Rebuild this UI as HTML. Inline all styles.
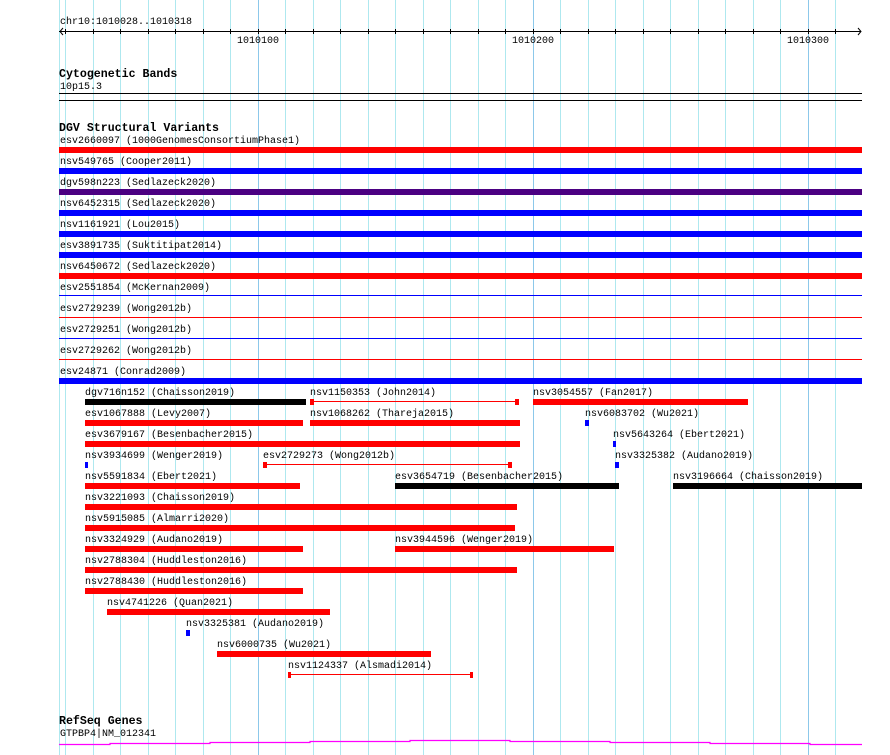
<!DOCTYPE html>
<html><head><meta charset="utf-8"><style>
*{margin:0;padding:0}
body{width:890px;height:755px;background:#fff;position:relative;overflow:hidden;font-family:"Liberation Mono","DejaVu Sans Mono",monospace;font-size:10px;color:#000}
.g{position:absolute;top:0;height:755px;width:1px;background:#aee8ef}
.gd{background:#8cc8ea}
.t{position:absolute;line-height:12px;padding-top:2px;white-space:nowrap;font-size:10px}
.h{position:absolute;font-weight:bold;font-size:11.6px;line-height:13px;padding-top:1px;white-space:nowrap}
.b{position:absolute;height:6px}
.r{background:#f00}.u{background:#00f}.k{background:#000}.p{background:#4b0082}
.l{position:absolute;height:1px}
.tk{position:absolute;top:29px;height:5px;width:1px;background:#000}
</style></head><body>
<div class="g" style="left:59px"></div>
<div class="g" style="left:65px"></div><div class="g" style="left:93px"></div><div class="g" style="left:120px"></div><div class="g" style="left:148px"></div><div class="g" style="left:175px"></div><div class="g" style="left:203px"></div><div class="g" style="left:230px"></div><div class="g gd" style="left:258px"></div><div class="g" style="left:285px"></div><div class="g" style="left:313px"></div><div class="g" style="left:340px"></div><div class="g" style="left:368px"></div><div class="g" style="left:395px"></div><div class="g" style="left:423px"></div><div class="g" style="left:450px"></div><div class="g" style="left:478px"></div><div class="g" style="left:505px"></div><div class="g gd" style="left:533px"></div><div class="g" style="left:560px"></div><div class="g" style="left:588px"></div><div class="g" style="left:615px"></div><div class="g" style="left:643px"></div><div class="g" style="left:670px"></div><div class="g" style="left:698px"></div><div class="g" style="left:725px"></div><div class="g" style="left:753px"></div><div class="g" style="left:780px"></div><div class="g gd" style="left:808px"></div><div class="g" style="left:835px"></div>

<div class="t" style="left:60px;top:15px">chr10:1010028..1010318</div>
<div class="l" style="left:59px;top:31px;width:802px;background:#000"></div>
<svg style="position:absolute;left:0;top:0" width="890" height="40"><path d="M63,28 L60,31.5 L63,35 M858,28 L861,31.5 L858,35" fill="none" stroke="#000" stroke-width="1"/></svg>
<div class="tk" style="left:65px"></div><div class="tk" style="left:93px"></div><div class="tk" style="left:120px"></div><div class="tk" style="left:148px"></div><div class="tk" style="left:175px"></div><div class="tk" style="left:203px"></div><div class="tk" style="left:230px"></div><div class="tk" style="left:258px"></div><div class="tk" style="left:285px"></div><div class="tk" style="left:313px"></div><div class="tk" style="left:340px"></div><div class="tk" style="left:368px"></div><div class="tk" style="left:395px"></div><div class="tk" style="left:423px"></div><div class="tk" style="left:450px"></div><div class="tk" style="left:478px"></div><div class="tk" style="left:505px"></div><div class="tk" style="left:533px"></div><div class="tk" style="left:560px"></div><div class="tk" style="left:588px"></div><div class="tk" style="left:615px"></div><div class="tk" style="left:643px"></div><div class="tk" style="left:670px"></div><div class="tk" style="left:698px"></div><div class="tk" style="left:725px"></div><div class="tk" style="left:753px"></div><div class="tk" style="left:780px"></div><div class="tk" style="left:808px"></div><div class="tk" style="left:835px"></div>
<div class="t" style="left:237px;top:34px">1010100</div>
<div class="t" style="left:512px;top:34px">1010200</div>
<div class="t" style="left:787px;top:34px">1010300</div>

<div class="h" style="left:59px;top:67px">Cytogenetic Bands</div>
<div class="t" style="left:60px;top:80px">10p15.3</div>
<div class="l" style="left:59px;top:93px;width:803px;background:#000"></div>
<div class="l" style="left:59px;top:100px;width:803px;background:#000"></div>

<div class="h" style="left:59px;top:121px">DGV Structural Variants</div>
<div class="t" style="left:60px;top:134px">esv2660097 (1000GenomesConsortiumPhase1)</div><div class="b r" style="left:59px;top:147px;width:803px"></div>
<div class="t" style="left:60px;top:155px">nsv549765 (Cooper2011)</div><div class="b u" style="left:59px;top:168px;width:803px"></div>
<div class="t" style="left:60px;top:176px">dgv598n223 (Sedlazeck2020)</div><div class="b p" style="left:59px;top:189px;width:803px"></div>
<div class="t" style="left:60px;top:197px">nsv6452315 (Sedlazeck2020)</div><div class="b u" style="left:59px;top:210px;width:803px"></div>
<div class="t" style="left:60px;top:218px">nsv1161921 (Lou2015)</div><div class="b u" style="left:59px;top:231px;width:803px"></div>
<div class="t" style="left:60px;top:239px">esv3891735 (Suktitipat2014)</div><div class="b u" style="left:59px;top:252px;width:803px"></div>
<div class="t" style="left:60px;top:260px">nsv6450672 (Sedlazeck2020)</div><div class="b r" style="left:59px;top:273px;width:803px"></div>
<div class="t" style="left:60px;top:281px">esv2551854 (McKernan2009)</div><div class="l u" style="left:59px;top:295px;width:803px"></div>
<div class="t" style="left:60px;top:302px">esv2729239 (Wong2012b)</div><div class="l r" style="left:59px;top:317px;width:803px"></div>
<div class="t" style="left:60px;top:323px">esv2729251 (Wong2012b)</div><div class="l u" style="left:59px;top:338px;width:803px"></div>
<div class="t" style="left:60px;top:344px">esv2729262 (Wong2012b)</div><div class="l r" style="left:59px;top:359px;width:803px"></div>
<div class="t" style="left:60px;top:365px">esv24871 (Conrad2009)</div><div class="b u" style="left:59px;top:378px;width:803px"></div>

<div class="t" style="left:85px;top:386px">dgv716n152 (Chaisson2019)</div><div class="b k" style="left:85px;top:399px;width:221px"></div>
<div class="t" style="left:310px;top:386px">nsv1150353 (John2014)</div><div class="b r" style="left:310px;top:399px;width:4px"></div><div class="l r" style="left:314px;top:401px;width:203px"></div><div class="b r" style="left:515px;top:399px;width:4px"></div>
<div class="t" style="left:533px;top:386px">nsv3054557 (Fan2017)</div><div class="b r" style="left:533px;top:399px;width:215px"></div>
<div class="t" style="left:85px;top:407px">esv1067888 (Levy2007)</div><div class="b r" style="left:85px;top:420px;width:218px"></div>
<div class="t" style="left:310px;top:407px">nsv1068262 (Thareja2015)</div><div class="b r" style="left:310px;top:420px;width:210px"></div>
<div class="t" style="left:585px;top:407px">nsv6083702 (Wu2021)</div><div class="b u" style="left:585px;top:420px;width:4px"></div>
<div class="t" style="left:85px;top:428px">esv3679167 (Besenbacher2015)</div><div class="b r" style="left:85px;top:441px;width:435px"></div>
<div class="t" style="left:613px;top:428px">nsv5643264 (Ebert2021)</div><div class="b u" style="left:613px;top:441px;width:3px"></div>
<div class="t" style="left:85px;top:449px">nsv3934699 (Wenger2019)</div><div class="b u" style="left:85px;top:462px;width:3px"></div>
<div class="t" style="left:263px;top:449px">esv2729273 (Wong2012b)</div><div class="b r" style="left:263px;top:462px;width:4px"></div><div class="l r" style="left:267px;top:464px;width:243px"></div><div class="b r" style="left:508px;top:462px;width:4px"></div>
<div class="t" style="left:615px;top:449px">nsv3325382 (Audano2019)</div><div class="b u" style="left:615px;top:462px;width:4px"></div>
<div class="t" style="left:85px;top:470px">nsv5591834 (Ebert2021)</div><div class="b r" style="left:85px;top:483px;width:215px"></div>
<div class="t" style="left:395px;top:470px">esv3654719 (Besenbacher2015)</div><div class="b k" style="left:395px;top:483px;width:224px"></div>
<div class="t" style="left:673px;top:470px">nsv3196664 (Chaisson2019)</div><div class="b k" style="left:673px;top:483px;width:189px"></div>
<div class="t" style="left:85px;top:491px">nsv3221093 (Chaisson2019)</div><div class="b r" style="left:85px;top:504px;width:432px"></div>
<div class="t" style="left:85px;top:512px">nsv5915085 (Almarri2020)</div><div class="b r" style="left:85px;top:525px;width:430px"></div>
<div class="t" style="left:85px;top:533px">nsv3324929 (Audano2019)</div><div class="b r" style="left:85px;top:546px;width:218px"></div>
<div class="t" style="left:395px;top:533px">nsv3944596 (Wenger2019)</div><div class="b r" style="left:395px;top:546px;width:219px"></div>
<div class="t" style="left:85px;top:554px">nsv2788304 (Huddleston2016)</div><div class="b r" style="left:85px;top:567px;width:432px"></div>
<div class="t" style="left:85px;top:575px">nsv2788430 (Huddleston2016)</div><div class="b r" style="left:85px;top:588px;width:218px"></div>
<div class="t" style="left:107px;top:596px">nsv4741226 (Quan2021)</div><div class="b r" style="left:107px;top:609px;width:223px"></div>
<div class="t" style="left:186px;top:617px">nsv3325381 (Audano2019)</div><div class="b u" style="left:186px;top:630px;width:4px"></div>
<div class="t" style="left:217px;top:638px">nsv6000735 (Wu2021)</div><div class="b r" style="left:217px;top:651px;width:214px"></div>
<div class="t" style="left:288px;top:659px">nsv1124337 (Alsmadi2014)</div><div class="b r" style="left:288px;top:672px;width:3px"></div><div class="l r" style="left:291px;top:674px;width:180px"></div><div class="b r" style="left:470px;top:672px;width:3px"></div>

<div class="h" style="left:59px;top:714px">RefSeq Genes</div>
<div class="t" style="left:60px;top:727px">GTPBP4|NM_012341</div>
<svg style="position:absolute;left:0;top:0" width="890" height="755"><polyline fill="none" stroke="#f0f" stroke-width="1.2" points="59,744.5 110,744.5 110,743.5 210,743.5 210,742.5 310,742.5 310,741.5 410,741.5 410,740.5 510,740.5 510,741.5 610,741.5 610,742.5 710,742.5 710,743.5 810,743.5 810,744.5 862,744.5"/></svg>
</body></html>
